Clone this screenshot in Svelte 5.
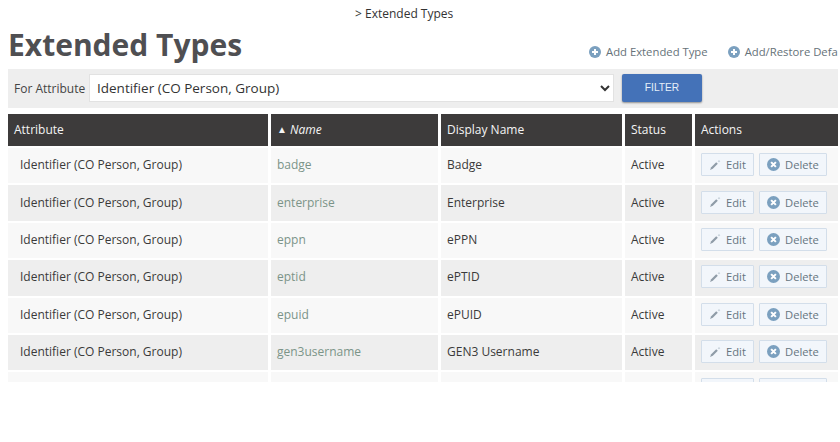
<script>
  const rows = [
    ['badge', 'Badge'],
    ['enterprise', 'Enterprise'],
    ['eppn', 'ePPN'],
    ['eptid', 'ePTID'],
    ['epuid', 'ePUID'],
    ['gen3username', 'GEN3 Username'],
    ['', '']
  ];
</script>

<div class="page">
  <div class="crumb">&gt; Extended Types</div>
  <div class="titlebar">
    <h1>Extended Types</h1>
    <div class="links">
      <a class="add">
        <svg viewBox="0 0 12 12" width="12" height="12"><circle cx="6" cy="6" r="6" fill="#7ba0bf"/><path d="M6 3v6M3 6h6" stroke="#fff" stroke-width="2"/></svg>
        Add Extended Type
      </a>
      <a class="add">
        <svg viewBox="0 0 12 12" width="12" height="12"><circle cx="6" cy="6" r="6" fill="#7ba0bf"/><path d="M6 3v6M3 6h6" stroke="#fff" stroke-width="2"/></svg>
        Add/Restore Default Types
      </a>
    </div>
  </div>

  <div class="filter">
    <span class="flabel">For Attribute</span>
    <select>
      <option>Identifier (CO Person, Group)</option>
    </select>
    <button class="go">FILTER</button>
  </div>

  <table>
    <colgroup>
      <col class="c1" /><col class="c2" /><col class="c3" /><col class="c4" /><col class="c5" />
    </colgroup>
    <thead>
      <tr>
        <th>Attribute</th>
        <th><span class="tri">▲</span> <em>Name</em></th>
        <th>Display Name</th>
        <th>Status</th>
        <th>Actions</th>
      </tr>
    </thead>
    <tbody>
      {#each rows as r}
        <tr>
          <td class="attr">{r[0] ? 'Identifier (CO Person, Group)' : ''}</td>
          <td class="name">{r[0]}</td>
          <td>{r[1]}</td>
          <td>{r[0] ? 'Active' : ''}</td>
          <td>
            <div class="acts">
              <span class="btn edit">
                <svg viewBox="0 0 12 12" width="12" height="12"><path d="M1 11l1.2-2.8 5-5 1.6 1.6-5 5z" fill="#8f9ca8"/><path d="M10 0.8l.4 1 1 .4-1 .4-.4 1-.4-1-1-.4 1-.4z" fill="#b5c2cc"/></svg>
                {r[0] ? 'Edit' : ''}
              </span>
              <span class="btn del">
                <svg viewBox="0 0 12 12" width="13" height="13"><circle cx="6" cy="6" r="6" fill="#7ba0bf"/><path d="M3.8 3.8l4.4 4.4M8.2 3.8l-4.4 4.4" stroke="#fff" stroke-width="1.9"/></svg>
                {r[0] ? 'Delete' : ''}
              </span>
            </div>
          </td>
        </tr>
      {/each}
    </tbody>
  </table>
</div>

<style>
  :global(body) {
    margin: 0;
    background: #fff;
  }
  .page {
    width: 838px;
    height: 382px;
    overflow: hidden;
    padding-left: 8px;
    box-sizing: border-box;
    font-family: "Open Sans", "Noto Sans", sans-serif;
    font-size: 12px;
    color: #333;
  }
  .crumb {
    height: 27px;
    line-height: 27px;
    padding-left: 347px;
    white-space: nowrap;
  }
  .titlebar {
    display: flex;
    justify-content: space-between;
    height: 42px;
  }
  h1 {
    margin: 0;
    font-size: 30px;
    line-height: 36px;
    font-weight: 700;
    color: #4f4f52;
    white-space: nowrap;
  }
  .links {
    display: flex;
    gap: 20px;
    padding-top: 17px;
    margin-left: auto;
    white-space: nowrap;
    flex: none;
    width: 249px;
  }
  .add {
    display: inline-flex;
    align-items: flex-start;
    gap: 5px;
    color: #667279;
    font-size: 11.3px;
    line-height: 16px;
  }
  .add svg {
    margin-top: 2px;
    flex: none;
  }
  .filter {
    display: flex;
    align-items: flex-start;
    height: 39px;
    box-sizing: border-box;
    padding-top: 5px;
    background: #eeeeee;
    padding-left: 6px;
  }
  .flabel {
    width: 75px;
    flex: none;
    color: #444;
    line-height: 29px;
  }
  select {
    width: 525px;
    height: 28px;
    flex: none;
    background: #fff;
    border: 1px solid #e2e2e2;
    border-radius: 0;
    font-family: inherit;
    font-size: 13.5px;
    color: #333;
    padding-left: 3px;
  }
  .go {
    margin-left: 8px;
    width: 80px;
    height: 28px;
    background: #4472b8;
    color: #e6eff9;
    border: 0;
    border-radius: 2px;
    font-family: "Liberation Sans", Arial, sans-serif;
    font-size: 10.2px;
    font-weight: 400;
    box-shadow: 0 1px 2px rgba(0, 0, 0, 0.4);
    padding: 0 0 2px;
  }
  table {
    width: 830px;
    margin-top: 6px;
    table-layout: fixed;
    border-collapse: separate;
    border-spacing: 0;
  }
  .c1 { width: 263px; }
  .c2 { width: 170px; }
  .c3 { width: 184px; }
  .c4 { width: 70px; }
  .c5 { width: 143px; }
  th {
    padding: 0 0 2px 6px;
    background: #3d3b3b;
    color: #f4f4f4;
    font-weight: 500;
    text-align: left;
    border-right: 3px solid #fff;
    border-bottom: 2px solid #fff;
    white-space: nowrap;
    font-size: 12px;
    box-sizing: content-box;
    height: 30px;
  }
  th:last-child { border-right: 0; }
  th em { font-style: italic; }
  .tri { font-size: 10px; position: relative; top: -1px; }
  td {
    height: 33.4px;
    padding: 0 0 2px 6px;
    background: #f8f8f8;
    border-right: 3px solid #fff;
    border-bottom: 2px solid #fff;
    white-space: nowrap;
    color: #3a3a3a;
  }
  td:last-child { border-right: 0; }
  tr:nth-child(even) td { background: #eeeeee; }
  td.attr { padding-left: 12px; }
  td.name { color: #7b9488; }
  .acts {
    display: flex;
    gap: 5px;
    font-size: 11.2px;
  }
  .btn {
    display: inline-flex;
    align-items: center;
    justify-content: center;
    gap: 5px;
    height: 23px;
    box-sizing: border-box;
    background: #f2f6fb;
    border: 1px solid #d3deea;
    border-radius: 1px;
    color: #66757f;
  }
  .edit { width: 53px; }
  .del { width: 68px; }
</style>
